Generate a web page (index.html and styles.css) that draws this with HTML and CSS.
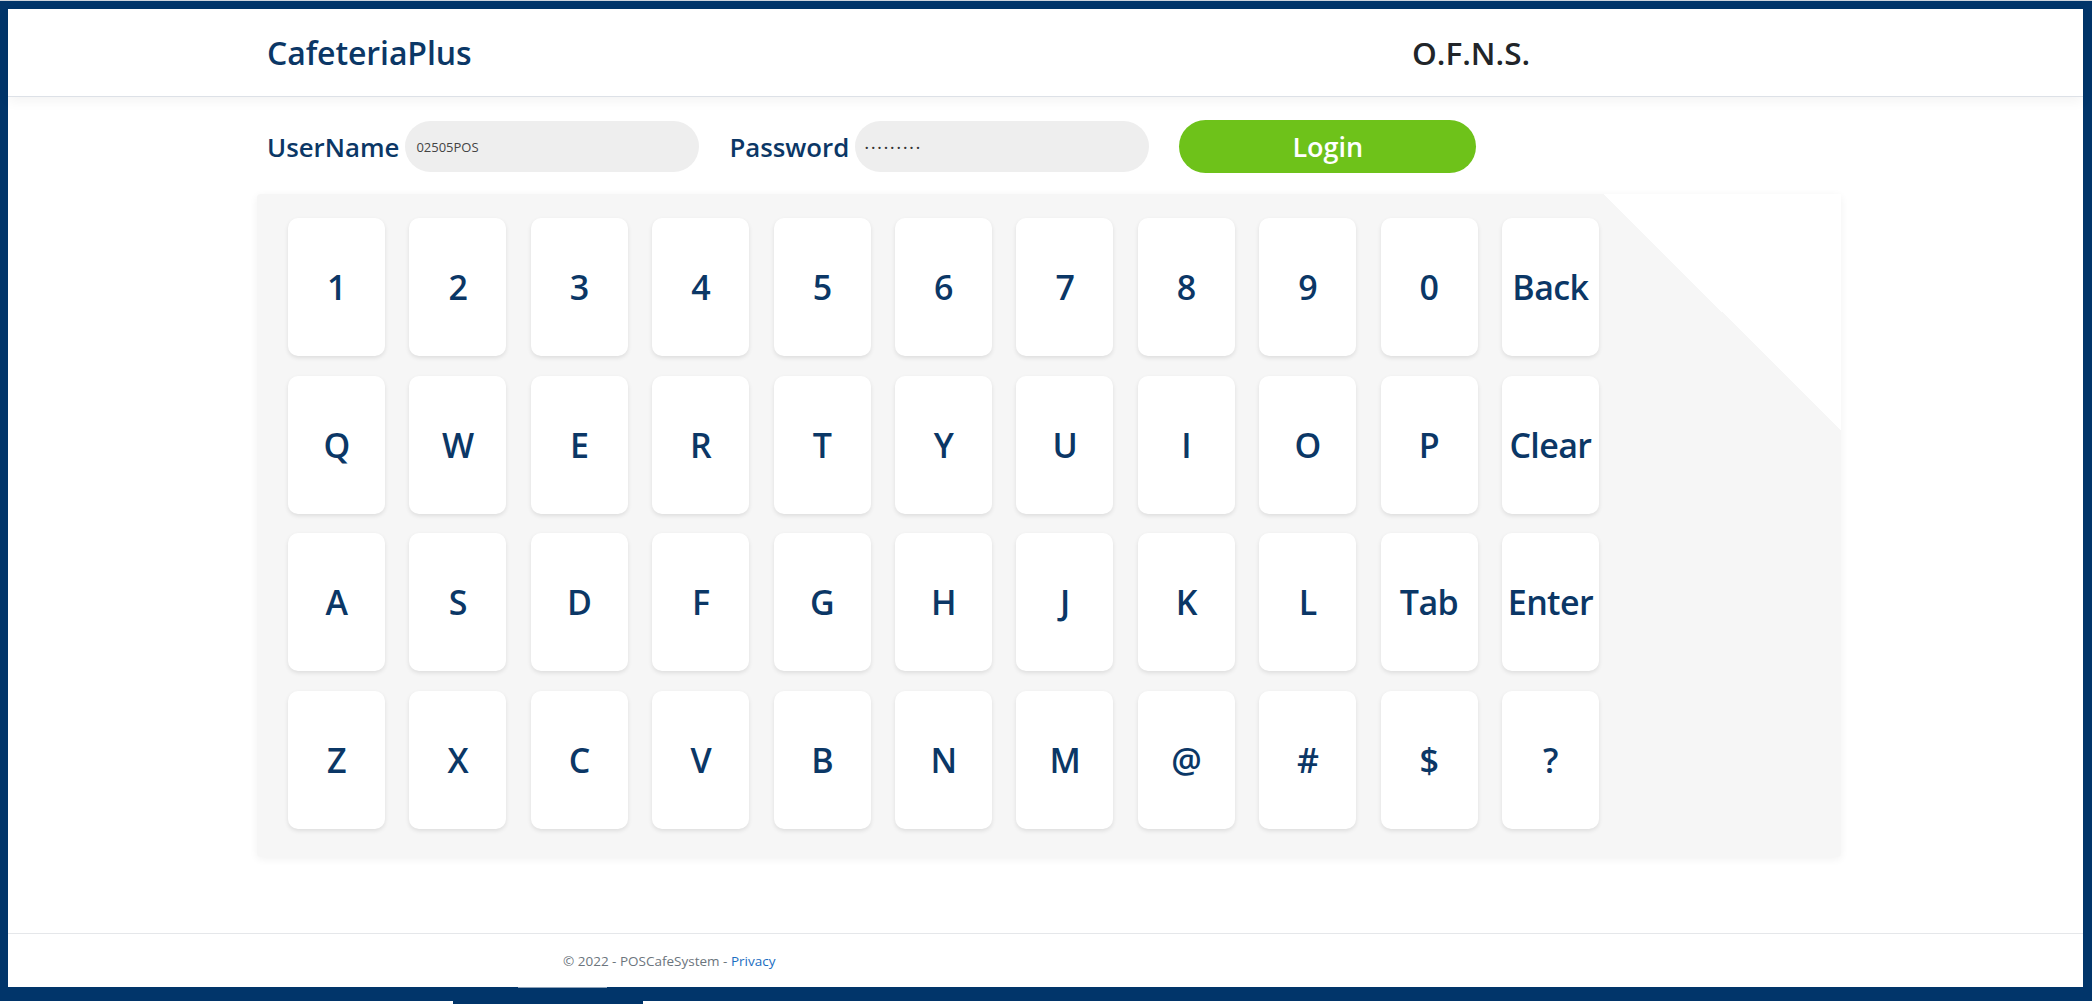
FILE: index.html
```html
<!DOCTYPE html>
<html lang="en">
<head>
<meta charset="utf-8">
<title>CafeteriaPlus</title>
<link rel="stylesheet" href="styles.css">
</head>
<body>
<div class="screen">
  <header class="topbar">
    <div class="brand">CafeteriaPlus</div>
    <div class="org">O.F.N.S.</div>
  </header>
  <main class="main">
    <form class="login">
      <label class="lbl">UserName</label>
      <input class="field" type="text" value="02505POS" readonly>
      <label class="lbl lbl-pass">Password</label>
      <input class="field field-pass" type="text" value="·········" readonly>
      <button class="btn-login" type="button">Login</button>
    </form>
    <section class="keyboard">
      <div class="keys">
        <button class="key" type="button">1</button>
        <button class="key" type="button">2</button>
        <button class="key" type="button">3</button>
        <button class="key" type="button">4</button>
        <button class="key" type="button">5</button>
        <button class="key" type="button">6</button>
        <button class="key" type="button">7</button>
        <button class="key" type="button">8</button>
        <button class="key" type="button">9</button>
        <button class="key" type="button">0</button>
        <button class="key" type="button">Back</button>
        <button class="key" type="button">Q</button>
        <button class="key" type="button">W</button>
        <button class="key" type="button">E</button>
        <button class="key" type="button">R</button>
        <button class="key" type="button">T</button>
        <button class="key" type="button">Y</button>
        <button class="key" type="button">U</button>
        <button class="key" type="button">I</button>
        <button class="key" type="button">O</button>
        <button class="key" type="button">P</button>
        <button class="key" type="button">Clear</button>
        <button class="key" type="button">A</button>
        <button class="key" type="button">S</button>
        <button class="key" type="button">D</button>
        <button class="key" type="button">F</button>
        <button class="key" type="button">G</button>
        <button class="key" type="button">H</button>
        <button class="key" type="button">J</button>
        <button class="key" type="button">K</button>
        <button class="key" type="button">L</button>
        <button class="key" type="button">Tab</button>
        <button class="key" type="button">Enter</button>
        <button class="key" type="button">Z</button>
        <button class="key" type="button">X</button>
        <button class="key" type="button">C</button>
        <button class="key" type="button">V</button>
        <button class="key" type="button">B</button>
        <button class="key" type="button">N</button>
        <button class="key" type="button">M</button>
        <button class="key" type="button">@</button>
        <button class="key" type="button">#</button>
        <button class="key" type="button">$</button>
        <button class="key" type="button">?</button>
      </div>
    </section>
  </main>
  <footer class="footer">© 2022 - POSCafeSystem - <a href="#">Privacy</a></footer>
</div>
<div class="task-line"></div>
<div class="task-tab"></div>
</body>
</html>
```
FILE: styles.css
```css
html, body {
  margin: 0;
  padding: 0;
  background: #fff;
}

body {
  position: relative;
  height: 1006px;
  overflow: hidden;
  font-family: "Open Sans", "Noto Sans", sans-serif;
  box-shadow: inset 0 1px 0 #cfd5dd;
}

.screen {
  box-sizing: border-box;
  width: 2092px;
  height: 1000px;
  margin-top: 1px;
  border-style: solid;
  border-color: #01356a;
  border-width: 8px 9px 14px 8px;
  display: flex;
  flex-direction: column;
  background: #fff;
}

/* header */
.topbar {
  flex: none;
  box-sizing: border-box;
  height: 88px;
  border-bottom: 1px solid #dde1e7;
  box-shadow: 0 4px 12px rgba(0, 0, 0, 0.05);
  display: flex;
  align-items: center;
  padding-left: 259px;
  position: relative;
  z-index: 1;
}

.brand {
  width: 1145px;
  font-size: 32px;
  letter-spacing: -0.1px;
  font-weight: 600;
  color: #0b3766;
}

.org {
  font-size: 31.5px;
  font-weight: 600;
  color: #212529;
}

/* main */
.main {
  flex: 1;
  padding-left: 249px;
}

.login {
  display: flex;
  align-items: center;
  height: 53px;
  margin: 23px 0 0;
  padding-left: 10px;
}

.lbl {
  font-size: 25.8px;
  letter-spacing: 0;
  font-weight: 600;
  color: #0b3766;
  margin-right: 6px;
}

.lbl-pass {
  margin-left: 30px;
}

.field {
  box-sizing: border-box;
  width: 294px;
  height: 51px;
  border: none;
  outline: none;
  border-radius: 26px;
  background: #eeeeee;
  padding: 0 11px;
  font-family: "Open Sans", sans-serif;
  font-size: 13px;
  color: #444;
}

.field-pass {
  font-size: 19px;
  letter-spacing: 1.4px;
  padding-left: 9px;
  color: #333;
}

.btn-login {
  margin-left: 30px;
  width: 297px;
  height: 53px;
  border: none;
  border-radius: 27px;
  background: #6ec21a;
  color: #fff;
  font-family: inherit;
  font-size: 27px;
  font-weight: 600;
  padding: 0;
}

/* keyboard */
.keyboard {
  position: relative;
  box-sizing: border-box;
  width: 1584px;
  height: 663px;
  margin-top: 21px;
  padding: 24px 0 0 31px;
  background: #f6f6f6;
  border-radius: 4px;
  box-shadow: 0 2px 8px rgba(0, 0, 0, 0.06);
}

.keyboard::after {
  content: "";
  position: absolute;
  top: 0;
  right: 0;
  width: 238px;
  height: 236px;
  background: linear-gradient(to bottom left, #fff 50%, rgba(255, 255, 255, 0) 50%);
}

.keys {
  display: grid;
  grid-template-columns: repeat(11, 97px);
  grid-auto-rows: 138px;
  column-gap: 24.4px;
  row-gap: 19.7px;
}

.key {
  border: none;
  padding: 0;
  background: #fff;
  border-radius: 10px;
  box-shadow: 0 2px 4px rgba(0, 0, 0, 0.1);
  font-family: inherit;
  font-size: 34px;
  letter-spacing: -0.6px;
  font-weight: 600;
  color: #0b3766;
}

/* footer */
.footer {
  flex: none;
  box-sizing: border-box;
  height: 54px;
  border-top: 1px solid #e5e7ea;
  padding-left: 555px;
  line-height: 54px;
  font-size: 13.5px;
  color: #6c757d;
}

.footer a {
  color: #1b6ec2;
  text-decoration: none;
}

/* screenshot artifacts at bottom edge */
.task-line {
  position: absolute;
  left: 518px;
  top: 987px;
  width: 89px;
  height: 1px;
  background: #8da2b8;
}

.task-tab {
  position: absolute;
  left: 453px;
  top: 1001px;
  width: 190px;
  height: 3px;
  background: #01356a;
}
```
